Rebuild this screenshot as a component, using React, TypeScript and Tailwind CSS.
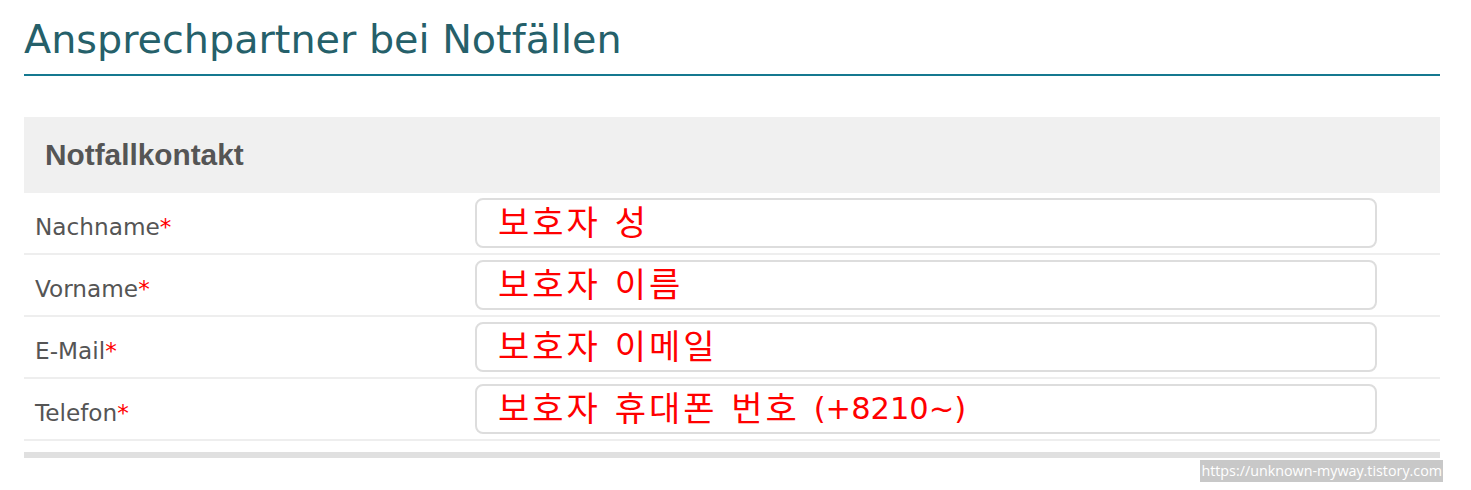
import React from 'react';

const rows = [
  { label: 'Nachname', value: '보호자 성', extra: '' },
  { label: 'Vorname', value: '보호자 이름', extra: '' },
  { label: 'E-Mail', value: '보호자 이메일', extra: '' },
  { label: 'Telefon', value: '보호자 휴대폰 번호 ', extra: '(+8210~)' },
];

export default function App() {
  return (
    <div className="w-[1471px] h-[490px] bg-white pl-[24px] pr-[31px] pt-[19px] relative">
      {/* Heading */}
      <h1 className="font-['DejaVu_Sans',sans-serif] text-[39.7px] leading-[40px] text-[#25606a] pb-[15px] border-b-2 border-[#157990]">
        Ansprechpartner bei Notfällen
      </h1>

      {/* Section */}
      <div className="mt-[41px]">
        <div className="h-[76px] bg-[#f0f0f0] flex items-center px-[21px]">
          <h2 className="font-['Liberation_Sans',Arial,sans-serif] font-bold text-[29.8px] leading-none text-[#555]">
            Notfallkontakt
          </h2>
        </div>

        {rows.map((row) => (
          <div
            key={row.label}
            className="h-[62px] flex items-center border-b-2 border-[#eeeeee]"
          >
            <label className="w-[451px] pl-[11px] pt-[8px] font-['DejaVu_Sans',sans-serif] text-[23.2px] text-[#555]">
              {row.label}
              <span className="text-[#ff0000]">*</span>
            </label>
            <div className="w-[902px] h-[50px] border-2 border-[#dddddd] rounded-[8px] flex items-center pl-[21px]">
              <span className="whitespace-pre font-['DejaVu_Sans','Noto_Sans_CJK_KR',sans-serif] text-[34px] tracking-[3px] leading-none text-[#ff0000]">
                {row.value}
              </span>
              {row.extra && (
                <span className="font-['DejaVu_Sans',sans-serif] text-[30.5px] leading-none text-[#ff0000]">
                  {row.extra}
                </span>
              )}
            </div>
          </div>
        ))}

        <div className="mt-[11px] h-[6px] bg-[#e0e0e0]" />
      </div>

      {/* Watermark */}
      <div className="absolute right-[28px] top-[460px] h-[22px] px-[1px] bg-[#c8c8c8] flex items-center">
        <span className="font-['Open_Sans',sans-serif] text-[14.3px] leading-none text-white">
          https://unknown-myway.tistory.com
        </span>
      </div>
    </div>
  );
}
